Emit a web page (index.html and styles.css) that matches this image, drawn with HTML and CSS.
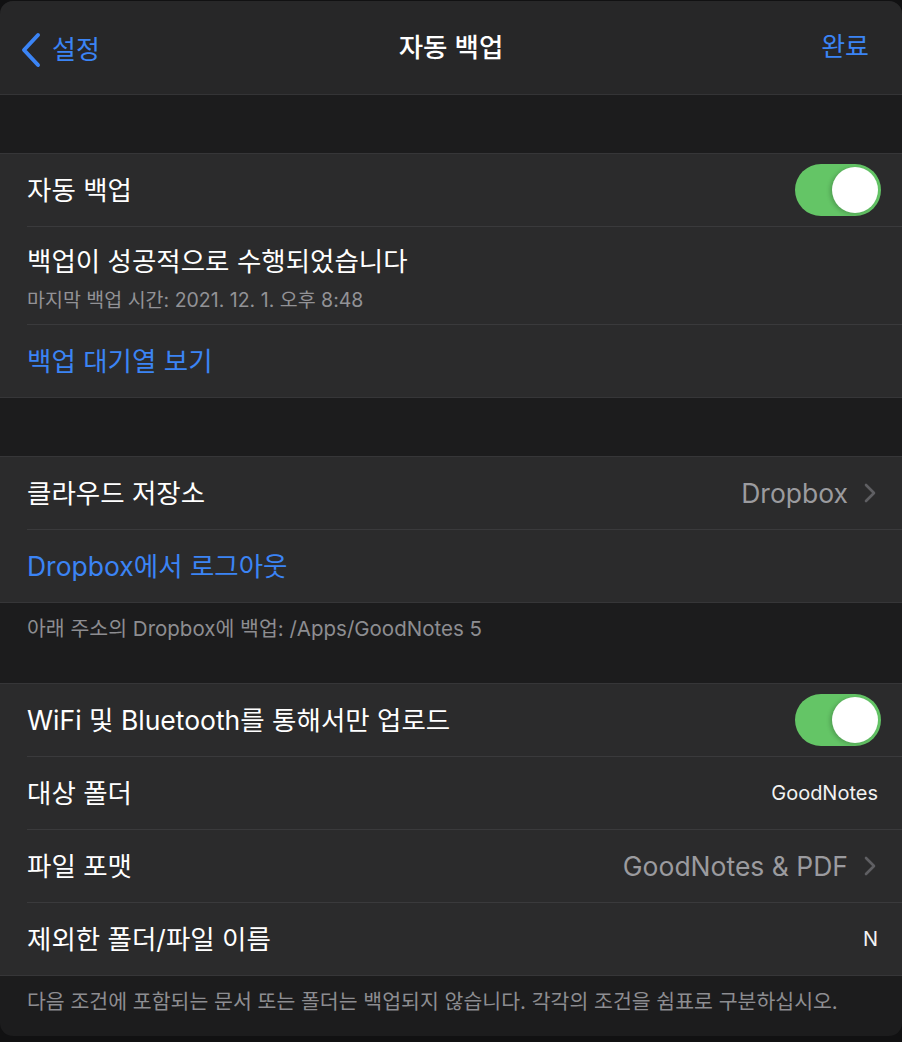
FILE: index.html
```html
<!DOCTYPE html>
<html lang="ko">
<head>
  <meta charset="UTF-8" />
  <meta name="viewport" content="width=device-width, initial-scale=1.0"/>
  <title>자동 백업</title>
  <link rel="stylesheet" href="styles.css">
</head>
<body>
  <div class="sheet">
    <div class="navbar">
      <div class="nav-left">
        <svg class="back-icon" width="22" height="36" viewBox="0 0 22 36">
          <path d="M18 3 L4 18 L18 33" fill="none" stroke="#3b84f5" stroke-width="4" stroke-linecap="round" stroke-linejoin="round"/>
        </svg>
        <span class="nav-link">설정</span>
      </div>
      <div class="nav-title">자동 백업</div>
      <div class="nav-right"><span class="nav-link">완료</span></div>
    </div>

    <div class="gap"></div>

    <div class="group">
      <div class="row">
        <div class="row-inner">
          <span class="label">자동 백업</span>
          <div class="toggle"><div class="knob"></div></div>
        </div>
      </div>
      <div class="row">
        <div class="row-inner two-line">
          <span class="label">백업이 성공적으로 수행되었습니다</span>
          <span class="sub">마지막 백업 시간: 2021. 12. 1. 오후 8:48</span>
        </div>
      </div>
      <div class="row">
        <div class="row-inner">
          <span class="label link">백업 대기열 보기</span>
        </div>
      </div>
    </div>

    <div class="gap"></div>

    <div class="group">
      <div class="row">
        <div class="row-inner">
          <span class="label">클라우드 저장소</span>
          <span class="value">Dropbox
            <svg class="chevron" width="12" height="20" viewBox="0 0 12 20">
              <path d="M2 2 L10 10 L2 18" fill="none" stroke="#5f5f63" stroke-width="2.6" stroke-linecap="round" stroke-linejoin="round"/>
            </svg>
          </span>
        </div>
      </div>
      <div class="row">
        <div class="row-inner">
          <span class="label link">Dropbox에서 로그아웃</span>
        </div>
      </div>
    </div>

    <div class="footer footer-tall">아래 주소의 Dropbox에 백업: /Apps/GoodNotes 5</div>

    <div class="group">
      <div class="row">
        <div class="row-inner">
          <span class="label">WiFi 및 Bluetooth를 통해서만 업로드</span>
          <div class="toggle"><div class="knob"></div></div>
        </div>
      </div>
      <div class="row">
        <div class="row-inner">
          <span class="label">대상 폴더</span>
          <span class="value-small">GoodNotes</span>
        </div>
      </div>
      <div class="row">
        <div class="row-inner">
          <span class="label">파일 포맷</span>
          <span class="value">GoodNotes &amp; PDF
            <svg class="chevron" width="12" height="20" viewBox="0 0 12 20">
              <path d="M2 2 L10 10 L2 18" fill="none" stroke="#5f5f63" stroke-width="2.6" stroke-linecap="round" stroke-linejoin="round"/>
            </svg>
          </span>
        </div>
      </div>
      <div class="row">
        <div class="row-inner">
          <span class="label">제외한 폴더/파일 이름</span>
          <span class="value-small">N</span>
        </div>
      </div>
    </div>

    <div class="footer">다음 조건에 포함되는 문서 또는 폴더는 백업되지 않습니다. 각각의 조건을 쉼표로 구분하십시오.</div>
  </div>
</body>
</html>
```

FILE: styles.css
```css
* {
  margin: 0;
  padding: 0;
  box-sizing: border-box;
}
body {
  background: #111112;
  font-family: "Inter", "Noto Sans CJK KR", sans-serif;
  color: #fff;
}
.sheet {
  margin-top: 1px;
  height: 1035px;
  background: #1c1c1d;
  border-radius: 13px;
  overflow: hidden;
}
.navbar {
  height: 94px;
  background: #272728;
  border-bottom: 1px solid #343436;
  display: grid;
  grid-template-columns: 1fr auto 1fr;
  align-items: start;
  padding: 31px 20px 0;
}
.nav-left {
  display: flex;
  align-items: center;
  gap: 10px;
}
.nav-link {
  color: #3b84f5;
  font-size: 26px;
  line-height: 30px;
}
.nav-title {
  font-size: 26.5px;
  line-height: 30px;
  font-weight: 500;
}
.nav-right {
  text-align: right;
  padding-right: 13px;
}
.gap {
  height: 58px;
}
.group {
  background: #2b2b2c;
  border-top: 1px solid #363638;
  border-bottom: 1px solid #363638;
}
.row {
  padding-left: 27px;
}
.row-inner {
  min-height: 73px;
  display: flex;
  align-items: center;
  justify-content: space-between;
  padding-right: 22px;
  border-bottom: 1px solid #3a3a3c;
}
.row:last-child .row-inner {
  border-bottom: none;
  min-height: 72px;
}
.label {
  font-size: 26.5px;
  line-height: 30px;
}
.link {
  color: #3b84f5;
}
.two-line {
  flex-direction: column;
  align-items: flex-start;
  justify-content: flex-start;
  min-height: 98px;
  padding-top: 19px;
}
.sub {
  margin-top: 11px;
  font-size: 19.5px;
  line-height: 26px;
  color: #929296;
}
.value {
  display: flex;
  align-items: center;
  gap: 16px;
  font-size: 26.5px;
  color: #9b9b9f;
}
.chevron {
  margin-right: 4px;
}
.value-small {
  font-size: 20px;
  color: #f2f2f2;
  margin-right: 2px;
}
.toggle {
  width: 86px;
  height: 52px;
  border-radius: 26px;
  background: #64c566;
  position: relative;
  margin-right: -1px;
}
.knob {
  position: absolute;
  top: 3px;
  right: 3px;
  width: 46px;
  height: 46px;
  border-radius: 50%;
  background: #fff;
  box-shadow: -2px 1px 4px rgba(0, 0, 0, 0.2);
}
.footer {
  padding: 13px 27px 0;
  font-size: 20.5px;
  line-height: 26px;
  color: #8d8d91;
}
.footer-tall {
  height: 80px;
}
```
